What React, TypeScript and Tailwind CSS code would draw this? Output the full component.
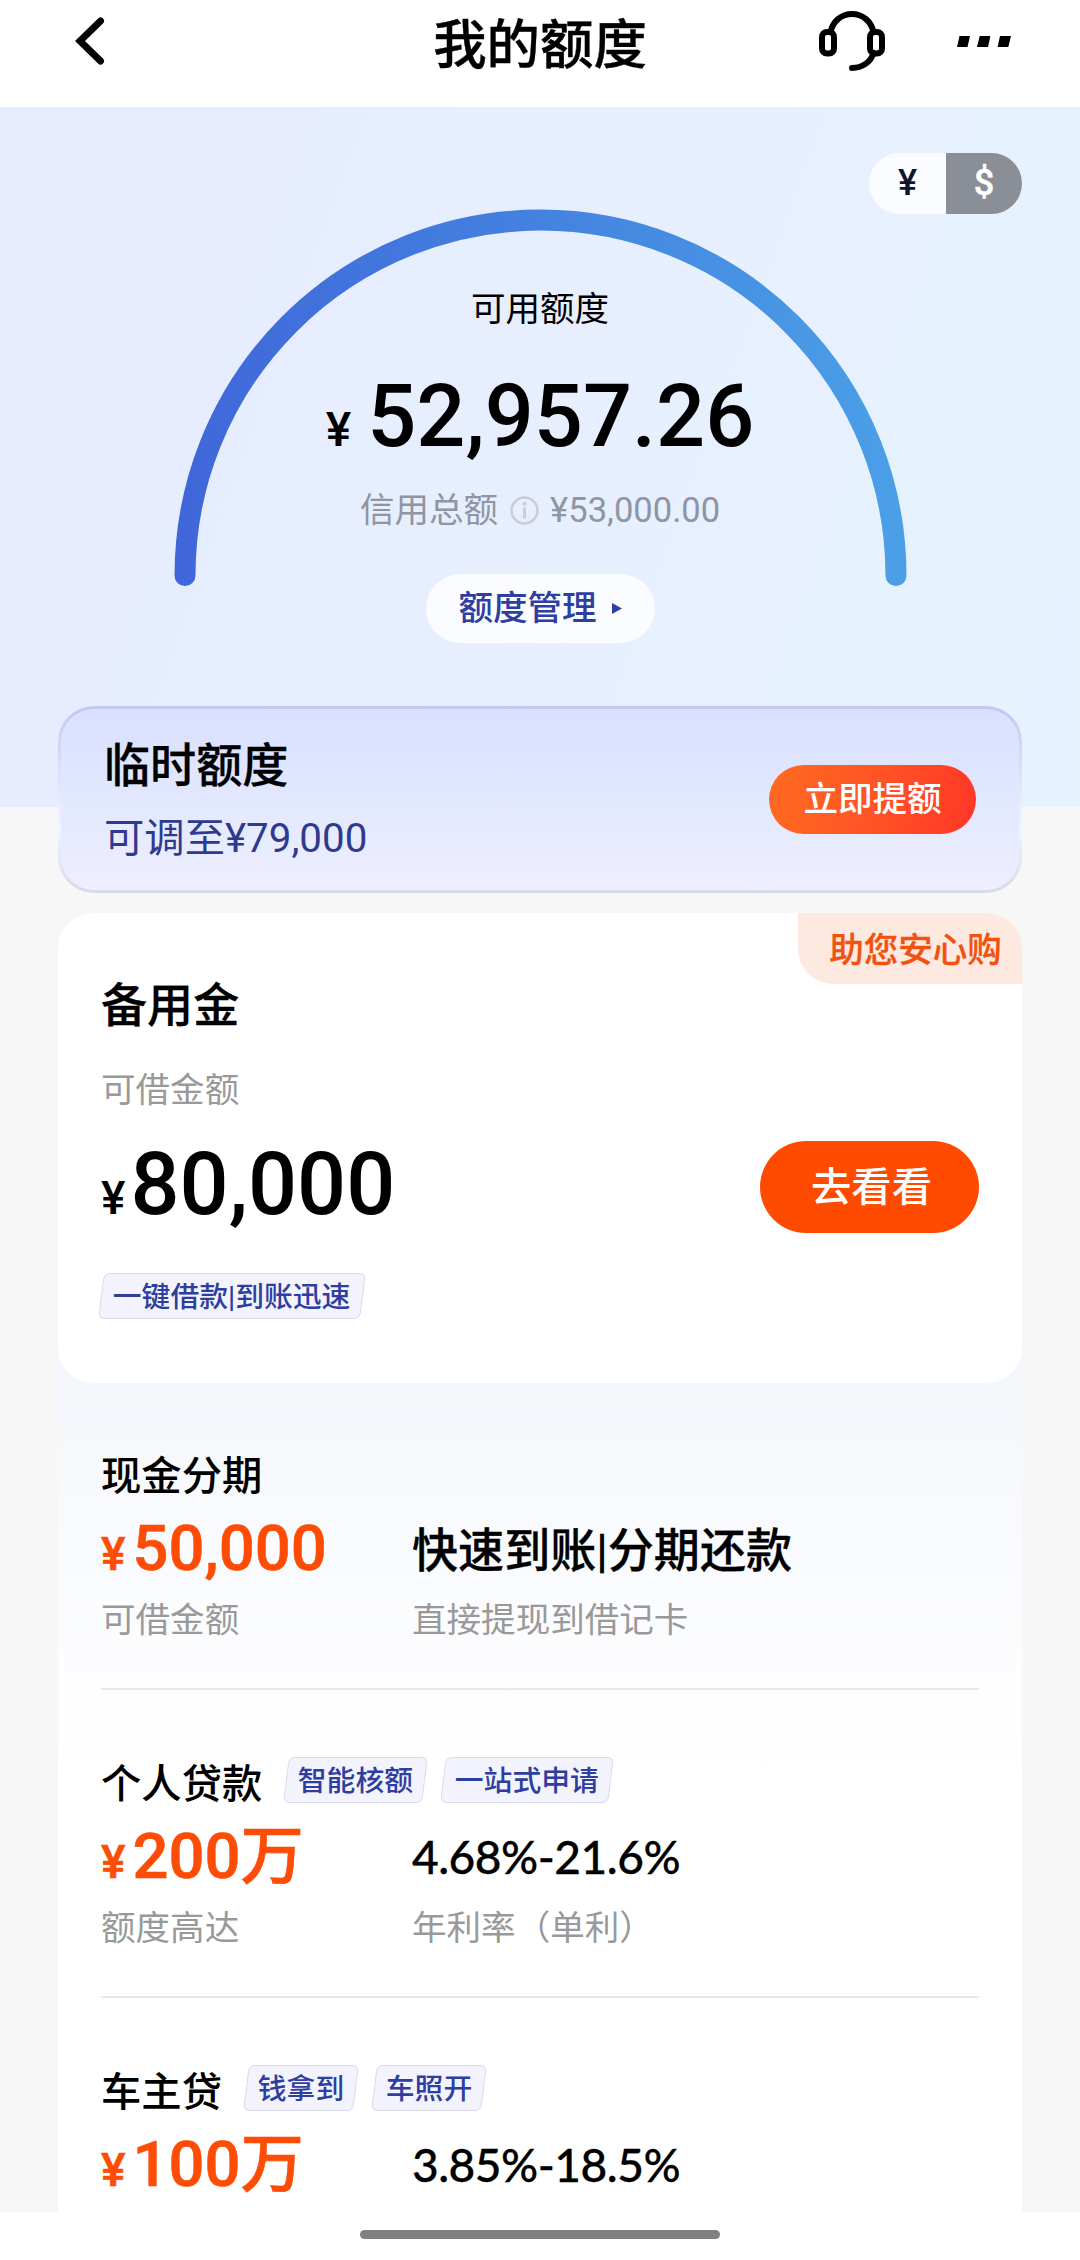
import type { ReactNode } from "react";

interface LoanProduct {
  name: string;
  tags: string[];
  amount: string;
  amountNote?: string;
  headline: string;
  headlineNote?: string;
  isRate?: boolean;
}

const products: LoanProduct[] = [
  {
    name: "现金分期",
    tags: [],
    amount: "50,000",
    amountNote: "可借金额",
    headline: "快速到账|分期还款",
    headlineNote: "直接提现到借记卡",
  },
  {
    name: "个人贷款",
    tags: ["智能核额", "一站式申请"],
    amount: "200万",
    amountNote: "额度高达",
    headline: "4.68%-21.6%",
    headlineNote: "年利率（单利）",
    isRate: true,
  },
  {
    name: "车主贷",
    tags: ["钱拿到", "车照开"],
    amount: "100万",
    headline: "3.85%-18.5%",
    isRate: true,
  },
];

function BackIcon() {
  return (
    <svg className="w-8 h-12" viewBox="0 0 32 48" fill="none">
      <path d="M25.5 4 L5 24 L25.5 44" stroke="#000" strokeWidth="7" strokeLinecap="round" strokeLinejoin="miter" />
    </svg>
  );
}

function HeadsetIcon() {
  return (
    <svg className="w-[68px] h-[62px]" viewBox="0 0 68 62" fill="none" stroke="#000" strokeWidth="6">
      <rect x="4" y="22" width="12" height="21.5" rx="5" />
      <rect x="52" y="22" width="12" height="21.5" rx="5" />
      <path d="M12.5 22 C15 11 23.5 4 34 4 S53 11 55.5 22" />
      <path d="M55.5 43 C53 52 44 58 34 58" strokeLinecap="round" />
    </svg>
  );
}

function MoreIcon() {
  return (
    <svg className="w-[54px] h-[11px]" viewBox="0 0 54 11">
      <path d="M2.5 0 H13 L10.5 11 H0 Z M22.7 0 H33.4 L31 11 H20 Z M43 0 H54 L51.3 11 H40.6 Z" />
    </svg>
  );
}

function InfoIcon() {
  return (
    <svg className="w-[29px] h-[29px]" viewBox="0 0 29 29" fill="none" stroke="#cbcdd3">
      <circle cx="14.5" cy="14.5" r="13" strokeWidth="2.6" />
      <path d="M14.5 11.5 V22.5" strokeWidth="3" />
      <circle cx="14.5" cy="7.8" r="2" fill="#cbcdd3" stroke="none" />
    </svg>
  );
}

function LimitArc() {
  return (
    <svg className="w-[733px] h-[378px]" viewBox="0 0 733 378" fill="none">
      <defs>
        <linearGradient id="arc" x1="0" y1="0" x2="1" y2="0">
          <stop offset="0" stopColor="#4067d9" />
          <stop offset="0.5" stopColor="#4482e0" />
          <stop offset="1" stopColor="#4b9fe7" />
        </linearGradient>
      </defs>
      <path d="M11 366.5 A355.5 355.5 0 0 1 722 366.5" stroke="url(#arc)" strokeWidth="21" strokeLinecap="round" />
    </svg>
  );
}

function Tag({ children }: { children: ReactNode }) {
  return (
    <span className="block w-fit h-[46px] px-[11px] -skew-x-[7deg] rounded-[6px] border border-[#d9daee] bg-[#f2f3fc]">
      <span className="block skew-x-[7deg] text-[28.8px] leading-[47px] font-medium text-[#2e3e9f]">
        {children}
      </span>
    </span>
  );
}

function ProductItem({ product }: { product: LoanProduct }) {
  return (
    <div className="mb-[70px]">
      <div className="flex h-12">
        <h3 className="text-[40.32px] leading-[49px] font-medium">{product.name}</h3>
        <div className="flex gap-[18px] ml-6 -mt-[3px]">
          {product.tags.map((tag) => (
            <Tag key={tag}>{tag}</Tag>
          ))}
        </div>
      </div>
      <div className="grid grid-cols-[311px_1fr] h-[72px] mt-3">
        <div className="text-[63.36px] leading-[72px] font-medium text-[#fc4c06] [-webkit-text-stroke:0.6px]">
          <span className="text-[46.08px] leading-none mr-[7px]">¥</span>
          {product.amount}
        </div>
        {product.isRate ? (
          <div className="font-['Lato','Noto_Sans_CJK_SC',sans-serif] text-[46.08px] leading-[74px] tracking-[-0.5px] font-medium [-webkit-text-stroke:0.3px]">
            {product.headline}
          </div>
        ) : (
          <div className="text-[46.08px] leading-[78px] font-medium [-webkit-text-stroke:0.3px]">{product.headline}</div>
        )}
      </div>
      {product.amountNote && (
        <div className="grid grid-cols-[311px_1fr] mt-4 pb-12 border-b-2 border-[#e7e8ea] text-[34.56px] leading-[40px] text-[#999]">
          <span>{product.amountNote}</span>
          <span>{product.headlineNote}</span>
        </div>
      )}
    </div>
  );
}

export default function App() {
  return (
    <div className="w-[1080px] h-[2260px] flex flex-col overflow-hidden bg-white text-black font-['Roboto','Noto_Sans_CJK_SC',sans-serif]">
      {/* Title bar */}
      <header className="grid grid-cols-3 items-start h-[107px] shrink-0 px-[69px]">
        <button className="justify-self-start mt-[17px] ml-[6px]">
          <BackIcon />
        </button>
        <h1 className="text-center text-[53.4px] leading-[91px] font-medium whitespace-nowrap [-webkit-text-stroke:0.4px]">
          我的额度
        </h1>
        <div className="flex items-center justify-self-end gap-[71px] mt-[10px]">
          <HeadsetIcon />
          <MoreIcon />
        </div>
      </header>

      <div className="h-[2105px] shrink-0 overflow-hidden bg-[#f7f7f7]">
        {/* Available limit */}
        <section className="grid h-[700px] bg-linear-[110deg,#e6ebfe,#e7effe_50%,#e6f3ff]">
          <div className="[grid-area:1/1] justify-self-center mt-[102px]">
            <LimitArc />
          </div>
          <div className="[grid-area:1/1] flex flex-col items-center pt-[182px]">
            <div className="text-[34.56px] leading-[40px]">可用额度</div>
            <div className="flex items-baseline h-[100px] mt-[38px] text-[86.4px] leading-[100px] font-medium">
              <span className="text-[48px] leading-none mr-4">¥</span>
              <span>52,957.26</span>
            </div>
            <div className="flex items-center mt-[23px] text-[34.56px] leading-[40px] text-[#8f95a2]">
              <span>信用总额</span>
              <span className="ml-3 mr-[11px]">
                <InfoIcon />
              </span>
              <span>¥53,000.00</span>
            </div>
            <button className="flex items-center justify-center w-[229px] h-[69px] mt-11 rounded-full bg-[#fafcff] text-[34.56px] font-medium text-[#2f3f9f]">
              额度管理
              <svg className="w-[10px] h-[11px] ml-[15px]" viewBox="0 0 10 11" fill="currentColor">
                <path d="M0 0 L10 5.5 L0 11 Z" />
              </svg>
            </button>
          </div>
          <div className="[grid-area:1/1] justify-self-end self-start flex w-[153px] h-[61px] mt-[46px] mr-[58px] rounded-full overflow-hidden text-[36px] leading-[60px] font-medium text-center">
            <span className="w-[77px] bg-[#fafcff] text-[#10152c]">¥</span>
            <span className="w-[76px] bg-[#8a8e97] text-white [-webkit-text-stroke:0.5px]">$</span>
          </div>
        </section>

        <main className="-mt-[101px] px-[58px]">
          {/* Temporary limit */}
          <section className="relative h-[187px] p-[3px] rounded-[36px] bg-linear-to-b from-[#c2c8ee] via-[#f2f5ff] via-65% to-[#d6daea]">
            <div className="flex justify-between h-full pl-[43px] pr-[43px] rounded-[33px] bg-linear-to-b from-[#dae0ff] via-[#e2e8fe] to-[#eeefff]">
              <div className="pt-[29px]">
                <h2 className="text-[46.08px] leading-[56px] font-medium [-webkit-text-stroke:0.3px]">临时额度</h2>
                <p className="mt-[21px] text-[40.32px] leading-[48px] text-[#2f3a8e]">可调至¥79,000</p>
              </div>
              <button className="w-[207px] h-[69px] mt-14 rounded-full bg-linear-[100deg,#ff6b20,#ff5426_50%,#ff3727] text-[34.56px] font-medium text-white">
                立即提额
              </button>
            </div>
          </section>

          {/* Reserve fund */}
          <section className="relative z-10 h-[470px] mt-5 pl-[43px] pr-[43px] pt-[65px] rounded-[35px] bg-white">
            <span className="absolute top-0 right-0 w-[224px] h-[71px] pl-[11px] text-center rounded-tr-[35px] rounded-bl-[35px] bg-[#fee9e1] text-[34.56px] leading-[74px] font-medium text-[#f0530f] [-webkit-text-stroke:0.3px]">
              助您安心购
            </span>
            <h2 className="text-[46.08px] leading-[56px] font-medium [-webkit-text-stroke:0.3px]">备用金</h2>
            <p className="mt-[36px] text-[34.56px] leading-[40px] text-[#999]">可借金额</p>
            <div className="flex items-center justify-between h-[100px] mt-[25px]">
              <div className="h-[100px] text-[86.4px] leading-[100px] font-medium">
                <span className="text-[46.08px] leading-none mr-[5px]">¥</span>80,000
              </div>
              <button className="w-[219px] h-[92px] mt-[3px] pl-1 pt-[4px] rounded-full bg-[#ff4b00] text-[40.32px] font-medium text-white">
                去看看
              </button>
            </div>
            <div className="mt-[38px]">
              <Tag>一键借款|到账迅速</Tag>
            </div>
          </section>

          {/* Other products, tucked under the card above */}
          <section className="h-[864px] -mt-[35px] pl-[43px] pr-[43px] pt-[104px] bg-linear-to-b from-[#f2f6fa] via-[#fafbfe] via-25% to-white to-50%">
            {products.map((product) => (
              <ProductItem key={product.name} product={product} />
            ))}
          </section>
        </main>
      </div>

      {/* Home indicator */}
      <footer className="flex justify-center h-12 pt-[18px] bg-white">
        <div className="w-[360px] h-[9px] rounded-full bg-[#808080]" />
      </footer>
    </div>
  );
}
